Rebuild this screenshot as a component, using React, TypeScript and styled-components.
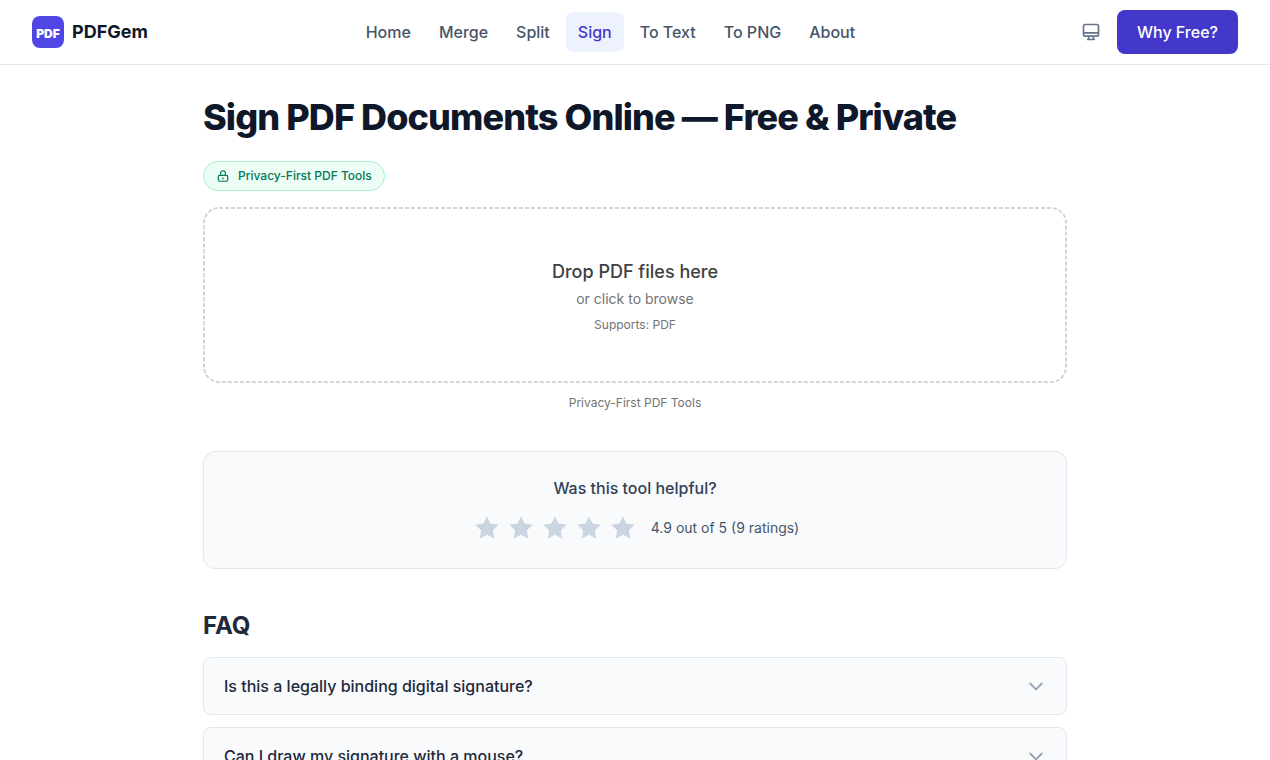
import React from "react";
import styled, { createGlobalStyle } from "styled-components";

const GlobalStyle = createGlobalStyle`
  *, *::before, *::after { box-sizing: border-box; }
  body {
    margin: 0;
    background: #fff;
    color: #0f172a;
    font-family: Inter, "Liberation Sans", sans-serif;
    font-size: 16px;
    line-height: 24px;
    -webkit-font-smoothing: antialiased;
  }
  h1, h2, p { margin: 0; }
  button { font: inherit; cursor: pointer; }
`;

const Header = styled.header`
  display: flex;
  align-items: center;
  justify-content: space-between;
  height: 65px;
  padding: 0 32px;
  border-bottom: 1px solid #e2e8f0;
`;

const Brand = styled.a`
  display: flex;
  align-items: center;
  gap: 8px;
  color: #0f172a;
  font-size: 18px;
  font-weight: 700;
  line-height: 32px;
  text-decoration: none;
`;

const Nav = styled.nav`
  display: flex;
  gap: 4px;
`;

const NavLink = styled.a<{ $active?: boolean }>`
  padding: 8px 12px;
  border-radius: 8px;
  background: ${(p) => (p.$active ? "#eef2ff" : "transparent")};
  color: ${(p) => (p.$active ? "#4338ca" : "#475569")};
  font-weight: 500;
  text-decoration: none;
`;

const Actions = styled.div`
  display: flex;
  align-items: center;
  gap: 8px;
`;

const IconButton = styled.button`
  display: flex;
  padding: 8px;
  border: 0;
  border-radius: 8px;
  background: none;
  color: #64748b;
`;

const PrimaryLink = styled.a`
  padding: 10px 20px;
  border-radius: 8px;
  background: #4338ca;
  color: #fff;
  font-weight: 500;
  text-decoration: none;
`;

const Main = styled.main`
  max-width: 896px;
  margin: 0 auto;
  padding: 32px 16px;
`;

const Title = styled.h1`
  font-size: 36px;
  font-weight: 800;
  line-height: 40px;
  letter-spacing: -0.025em;
`;

const Badge = styled.div`
  display: flex;
  align-items: center;
  gap: 8px;
  width: fit-content;
  margin: 24px 0 16px;
  padding: 6px 12px;
  border: 1px solid #a7f3d0;
  border-radius: 15px;
  background: #ecfdf5;
  color: #047857;
  font-size: 12px;
  font-weight: 500;
  line-height: 16px;
`;

const DropZone = styled.label`
  position: relative;
  display: flex;
  flex-direction: column;
  align-items: center;
  padding: 50px;
  border-radius: 16px;
  cursor: pointer;
`;

const DashedOutline = styled.svg`
  position: absolute;
  inset: 0;
  width: 100%;
  height: 100%;
  pointer-events: none;

  rect {
    width: calc(100% - 2px);
    height: calc(100% - 2px);
    fill: none;
    stroke: #d4d4d4;
    stroke-width: 2px;
    stroke-dasharray: 4 2;
  }
`;

const FileInput = styled.input`
  display: none;
`;

const DropTitle = styled.span`
  color: #404040;
  font-size: 18px;
  font-weight: 500;
  line-height: 30px;
`;

const DropHint = styled.span`
  margin: 2px 0 8px;
  color: #737373;
  font-size: 14px;
  line-height: 20px;
`;

const DropNote = styled.span`
  color: #737373;
  font-size: 12px;
  line-height: 16px;
`;

const Caption = styled.p`
  margin-top: 12px;
  color: #737373;
  font-size: 12px;
  line-height: 16px;
  text-align: center;
`;

const RatingCard = styled.section`
  display: flex;
  flex-direction: column;
  align-items: center;
  gap: 12px;
  margin-top: 40px;
  padding: 24px;
  border: 1px solid #e2e8f0;
  border-radius: 12px;
  background: #f8fafc;
`;

const RatingQuestion = styled.p`
  color: #334155;
  font-weight: 500;
`;

const RatingRow = styled.div`
  display: flex;
  align-items: center;
  gap: 12px;
`;

const Stars = styled.div`
  display: flex;
  gap: 2px;
`;

const StarButton = styled.button`
  display: flex;
  padding: 4px;
  border: 0;
  background: none;
  color: #cbd5e1;
`;

const RatingText = styled.span`
  color: #475569;
  font-size: 14px;
  line-height: 20px;
`;

const FaqTitle = styled.h2`
  margin: 40px 0 14px;
  color: #1e293b;
  font-size: 24px;
  font-weight: 700;
  line-height: 34px;
`;

const FaqList = styled.div`
  display: flex;
  flex-direction: column;
  gap: 12px;
`;

const FaqButton = styled.button`
  display: flex;
  align-items: center;
  justify-content: space-between;
  padding: 16px 20px;
  border: 1px solid #e2e8f0;
  border-radius: 8px;
  background: #f8fafc;
  color: #1e293b;
  font-weight: 500;
  text-align: left;

  svg { color: #94a3b8; }
`;

const Logo = () => (
  <svg width="32" height="32" viewBox="0 0 32 32" aria-hidden="true">
    <rect width="32" height="32" rx="8" fill="#4f46e5" />
    <text x="16" y="22" textAnchor="middle" fill="#fff" fontFamily="Inter, sans-serif" fontWeight="900" fontSize="12">
      PDF
    </text>
  </svg>
);

const MonitorIcon = () => (
  <svg width="20" height="20" viewBox="0 0 24 24" fill="none" stroke="currentColor" strokeWidth="2" strokeLinecap="round" strokeLinejoin="round" aria-hidden="true">
    <path d="M9.75 17L9 20l-1 1h8l-1-1-.75-3M3 13h18M5 17h14a2 2 0 002-2V5a2 2 0 00-2-2H5a2 2 0 00-2 2v10a2 2 0 002 2z" />
  </svg>
);

const LockIcon = () => (
  <svg width="14" height="14" viewBox="0 0 24 24" fill="none" stroke="currentColor" strokeWidth="2" strokeLinecap="round" strokeLinejoin="round" aria-hidden="true">
    <path d="M12 15v2m-6 4h12a2 2 0 002-2v-6a2 2 0 00-2-2H6a2 2 0 00-2 2v6a2 2 0 002 2zm10-10V7a4 4 0 00-8 0v4h8z" />
  </svg>
);

const StarIcon = () => (
  <svg width="24" height="24" viewBox="0 0 24 24" fill="currentColor" stroke="currentColor" strokeWidth="1.5" aria-hidden="true">
    <path d="M12 2l3.09 6.26L22 9.27l-5 4.87 1.18 6.88L12 17.77l-6.18 3.25L7 14.14 2 9.27l6.91-1.01L12 2z" />
  </svg>
);

const ChevronIcon = () => (
  <svg width="20" height="20" viewBox="0 0 24 24" fill="none" stroke="currentColor" strokeWidth="2.25" strokeLinecap="round" strokeLinejoin="round" aria-hidden="true">
    <path d="M19 9l-7 7-7-7" />
  </svg>
);

const links = ["Home", "Merge", "Split", "Sign", "To Text", "To PNG", "About"];
const questions = ["Is this a legally binding digital signature?", "Can I draw my signature with a mouse?"];

export default function App() {
  return (
    <>
      <GlobalStyle />
      <Header>
        <Brand href="#">
          <Logo />
          PDFGem
        </Brand>
        <Nav>
          {links.map((link) => (
            <NavLink key={link} href="#" $active={link === "Sign"}>
              {link}
            </NavLink>
          ))}
        </Nav>
        <Actions>
          <IconButton type="button" aria-label="Theme">
            <MonitorIcon />
          </IconButton>
          <PrimaryLink href="#">Why Free?</PrimaryLink>
        </Actions>
      </Header>
      <Main>
        <Title>Sign PDF Documents Online — Free &amp; Private</Title>
        <Badge>
          <LockIcon />
          Privacy-First PDF Tools
        </Badge>
        <DropZone>
          <DashedOutline aria-hidden="true">
            <rect x="1" y="1" rx="15" />
          </DashedOutline>
          <FileInput type="file" accept="application/pdf" />
          <DropTitle>Drop PDF files here</DropTitle>
          <DropHint>or click to browse</DropHint>
          <DropNote>Supports: PDF</DropNote>
        </DropZone>
        <Caption>Privacy-First PDF Tools</Caption>
        <RatingCard>
          <RatingQuestion>Was this tool helpful?</RatingQuestion>
          <RatingRow>
            <Stars>
              {[1, 2, 3, 4, 5].map((n) => (
                <StarButton key={n} type="button" aria-label={`Rate ${n} out of 5`}>
                  <StarIcon />
                </StarButton>
              ))}
            </Stars>
            <RatingText>4.9 out of 5 (9 ratings)</RatingText>
          </RatingRow>
        </RatingCard>
        <FaqTitle>FAQ</FaqTitle>
        <FaqList>
          {questions.map((question) => (
            <FaqButton key={question} type="button" aria-expanded="false">
              {question}
              <ChevronIcon />
            </FaqButton>
          ))}
        </FaqList>
      </Main>
    </>
  );
}
